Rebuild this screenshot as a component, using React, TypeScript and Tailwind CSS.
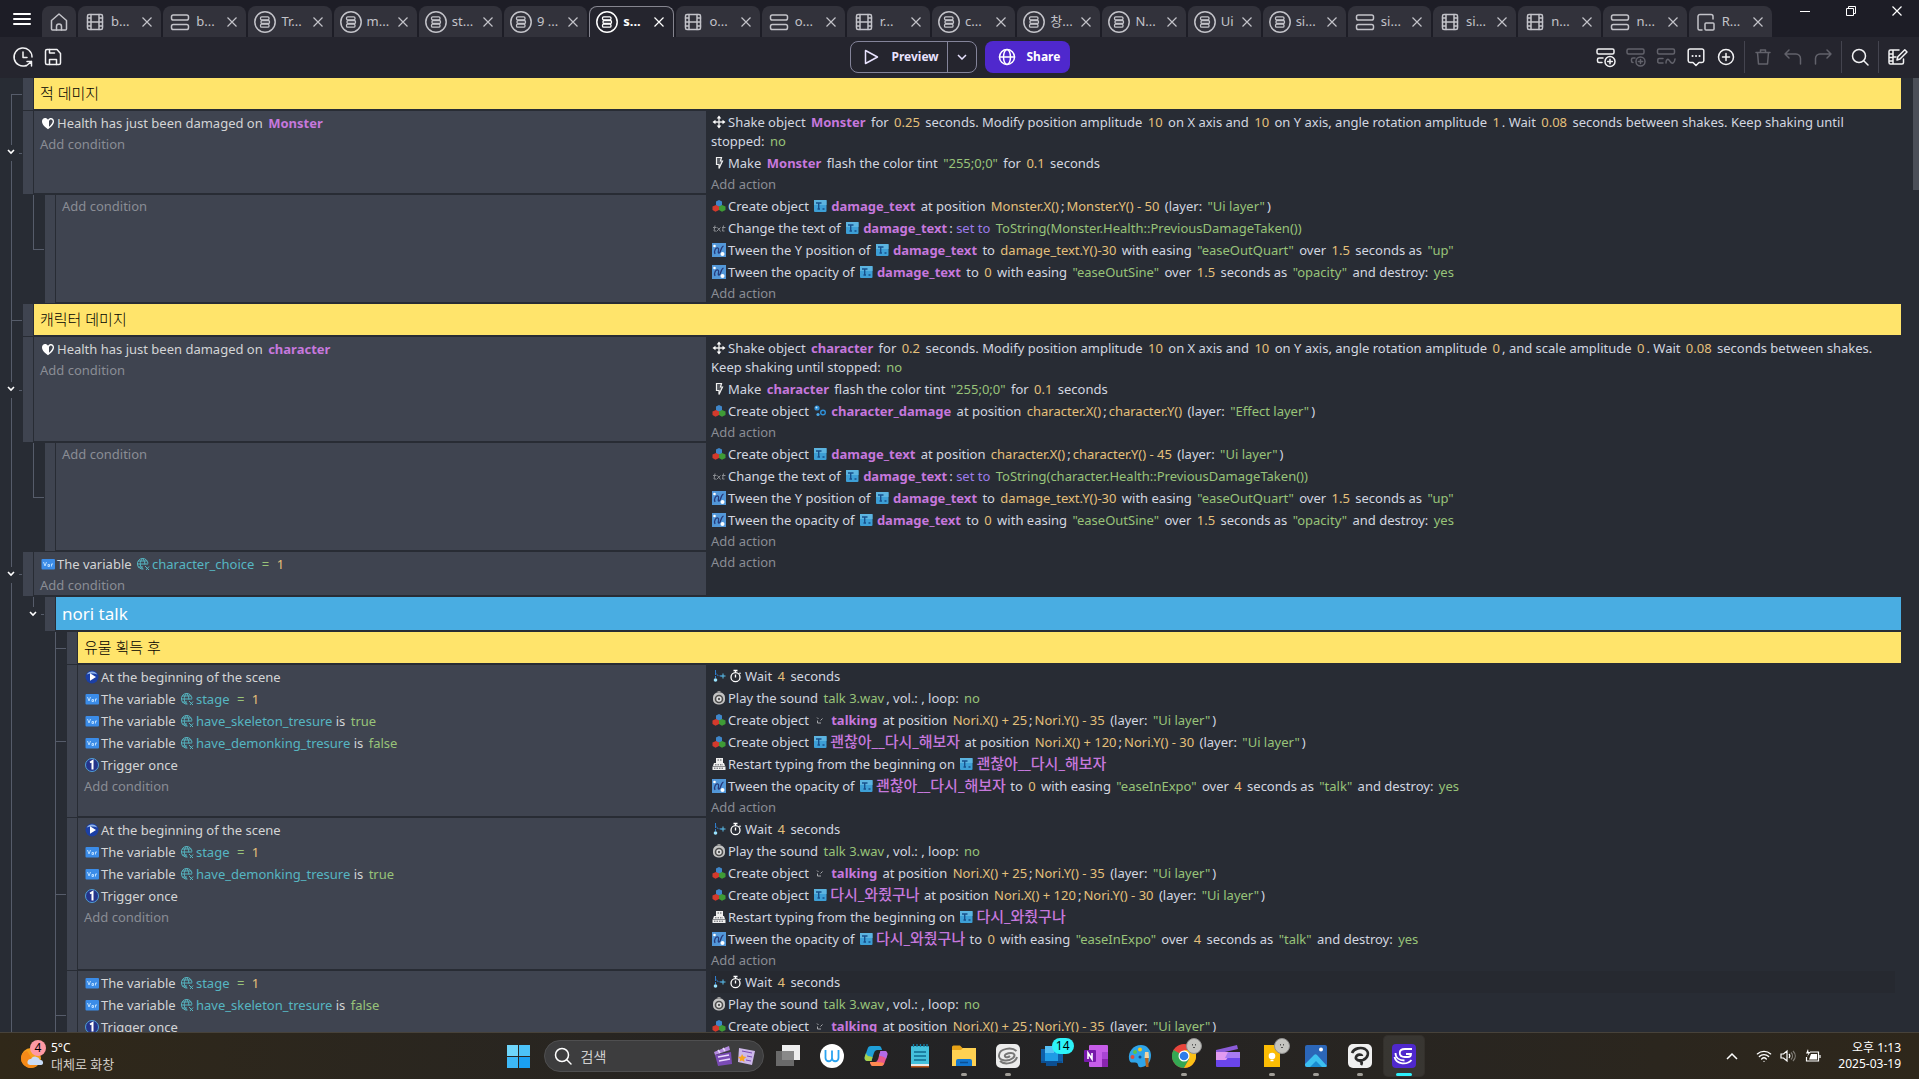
import React from 'react';
import { Wifi } from 'lucide-react';

type IconProps = { className?: string };

const Stroke: React.FC<{ className?: string; children: React.ReactNode }> = ({ className = '', children }) => (
  <svg
    viewBox="0 0 24 24"
    className={`h-6 w-6 shrink-0 ${className}`}
    fill="none"
    stroke="currentColor"
    strokeWidth="1.5"
    strokeLinecap="round"
    strokeLinejoin="round"
    aria-hidden="true"
  >
    {children}
  </svg>
);

/* ---------- tab and toolbar icons ---------- */

const HomeIcon = () => (
  <Stroke>
    <path d="M4.5 10.5 12 4l7.500 6.500V19a1 1 0 0 1-1 1h-13a1 1 0 0 1-1-1z" />
    <path d="M9.500 20v-3.500a2.500 2.500 0 0 1 5 0V20" />
  </Stroke>
);

const FilmIcon = () => (
  <Stroke>
    <rect x="4.500" y="4.500" width="15" height="15" rx="1.500" />
    <path d="M8 4.500v15M16 4.500v15M8 12h8M4.500 8H8M4.500 12H8M4.500 16H8M16 8h3.500M16 12h3.500M16 16h3.500" />
  </Stroke>
);

const LayersIcon = () => (
  <Stroke>
    <rect x="3.500" y="5" width="17" height="5" rx="1.800" />
    <rect x="3.500" y="14.500" width="17" height="5" rx="1.800" />
  </Stroke>
);

const EventsIcon = () => (
  <Stroke>
    <circle cx="12" cy="12" r="10.200" />
    <g strokeWidth="1.300">
      <rect x="7.500" y="6.800" width="8.500" height="3" rx="1.200" />
      <rect x="8" y="10.500" width="8.500" height="3" rx="1.200" />
      <rect x="7.500" y="14.200" width="8.500" height="3" rx="1.200" />
    </g>
  </Stroke>
);

const ExternalIcon = () => (
  <Stroke>
    <path d="M8 20H5.500a1.500 1.500 0 0 1-1.500-1.500v-12A2 2 0 0 1 6 4.500h11a2 2 0 0 1 2 2V9" />
    <rect x="11" y="13" width="9" height="7" rx="1" />
  </Stroke>
);

const HistoryIcon = () => (
  <Stroke>
    <path d="M15 20.500A9 9 0 1 1 21 12M12 7v5.500h4M16 16.500h4.500V21M20.500 16.500 15 21" />
  </Stroke>
);

const SaveIcon = () => (
  <Stroke>
    <path d="M4.500 6A1.500 1.500 0 0 1 6 4.500h10l3.500 4V18a1.500 1.500 0 0 1-1.500 1.500H6A1.500 1.500 0 0 1 4.500 18z" />
    <path d="M8.500 19.500v-5h7v5M8.500 4.500V8h5" />
  </Stroke>
);

const AddEventIcon = ({ className }: IconProps) => (
  <Stroke className={className}>
    <rect x="3" y="4" width="17" height="5" rx="1.500" />
    <path d="M9 13H5a1.500 1.500 0 0 0-1.500 1.500v1.500A1.500 1.500 0 0 0 5 17.500h3" />
    <circle cx="16" cy="16.500" r="5" />
    <path d="M16 14.200v4.600M13.700 16.500h4.600" />
  </Stroke>
);

const AddSubEventIcon = ({ className }: IconProps) => (
  <Stroke className={className}>
    <rect x="3" y="4" width="17" height="5" rx="1.500" />
    <path d="M11 13H9a1.500 1.500 0 0 0-1.500 1.500v1.500A1.500 1.500 0 0 0 9 17.500" />
    <circle cx="16.500" cy="16.500" r="4.500" />
    <path d="M16.500 14.400v4.200M14.400 16.500h4.200" />
  </Stroke>
);

const FreehandEventIcon = ({ className }: IconProps) => (
  <Stroke className={className}>
    <rect x="3.500" y="4" width="17" height="5" rx="1.500" />
    <path d="M9 13.500H5a1.200 1.200 0 0 0-1.200 1.200v2A1.200 1.200 0 0 0 5 18h4M12 18c0-3 1.500-4.500 3-3s2 4 4 3 1.500-2.500 2-4" />
  </Stroke>
);

const CommentIcon = () => (
  <Stroke>
    <path d="M6 4h12a1.800 1.800 0 0 1 1.800 1.800v10a1.800 1.800 0 0 1-1.800 1.700h-3L12 20.500 9 17.500H6a1.800 1.800 0 0 1-1.800-1.700v-10A1.800 1.800 0 0 1 6 4z" />
    <path d="M8.500 11h.1M12 11h.1M15.500 11h.1" strokeWidth="2" />
  </Stroke>
);

const PlusCircleIcon = () => (
  <Stroke>
    <circle cx="12" cy="12" r="7.500" />
    <path d="M12 8.500v7M8.500 12h7" />
  </Stroke>
);

const TrashIcon = () => (
  <Stroke>
    <path d="M5 7.500h14M9.500 7.500V5h5v2.500M6.500 7.500l1 11.500h9l1-11.500" />
  </Stroke>
);

const UndoIcon = () => (
  <Stroke>
    <path d="M8 5 4 9l4 4M4 9h11a4.500 4.500 0 0 1 4.500 4.500V19" />
  </Stroke>
);

const RedoIcon = () => (
  <Stroke>
    <path d="m16 5 4 4-4 4M20 9H9a4.500 4.500 0 0 0-4.500 4.500V19" />
  </Stroke>
);

const SearchIcon = ({ className }: IconProps) => (
  <Stroke className={className}>
    <circle cx="11" cy="11" r="6.500" />
    <path d="m16 16 4 4" />
  </Stroke>
);

const EditSceneIcon = () => (
  <Stroke>
    <path d="M14 5H5.500A1.500 1.500 0 0 0 4 6.500v11A1.500 1.500 0 0 0 5.500 19H17a1.500 1.500 0 0 0 1.500-1.500V14M8 5v14M4 9h4M4 12.500h4M4 16h4M8 12h3" />
    <path d="m12 15 .8-3.200 7-7 2.200 2.200-7 7z" />
  </Stroke>
);

const GlobeIcon = () => (
  <Stroke>
    <circle cx="12" cy="12" r="7.500" />
    <ellipse cx="12" cy="12" rx="3.500" ry="7.500" />
    <path d="M4.500 12h15" />
  </Stroke>
);

/* ---------- event sheet icons ---------- */

const Small: React.FC<{ className?: string; children: React.ReactNode }> = ({ className = '', children }) => (
  <svg viewBox="0 0 16 16" className={`mr-px inline-block h-4 w-4 align-[-3px] ${className}`} aria-hidden="true">
    {children}
  </svg>
);

const HealthIcon = () => (
  <Small>
    <path d="M8 14.200C3.500 11 2 8.800 2 6.300 2 4.300 3.300 3 5 3c1.300 0 2.300.6 3 1.700C8.700 3.600 9.700 3 11 3c1.700 0 3 1.300 3 3.300 0 2.500-1.500 4.700-6 7.900z" fill="#fff" />
    <path d="M9 6c.4-1 1.100-1.600 2-1.600 1 0 1.600.8 1.600 1.900 0 1.700-1.200 3.400-3.600 5.400z" fill="#3f4450" />
  </Small>
);

const VarIcon = () => (
  <Small>
    <rect x="1.500" y="3" width="13.500" height="10.500" rx="1" fill="#3b8ce8" />
    <path d="m3.500 6 1.500 4 1.500-4M8 8.500h1.500v2H8zM11.500 10.500V8h1.500" stroke="#b9dcff" fill="none" />
  </Small>
);

const GlobalVarIcon = () => (
  <Small>
    <g fill="none" stroke="#56b6c2">
      <path d="M8.500 13A5.300 5.300 0 1 1 13 7.500M2 8h11M3 5h9M3 11h5M7.500 2.500c-3 3-3 7.500 0 10.500M7.500 2.500c2 2 2.500 4 2.300 6" />
      <path d="m10 10 4 4M14 10.500 11 14" />
    </g>
  </Small>
);

const PlayIcon = () => (
  <Small>
    <circle cx="8" cy="8" r="6.500" fill="#1b3fa5" />
    <path d="M2.700 5.500A6.200 6.200 0 0 1 13.300 5.500c-3-1.500-7.600-1.500-10.600 0z" fill="#8fb4ea" />
    <path d="M6 4.200v7.600L12 8z" fill="#fff" />
  </Small>
);

const OnceIcon = () => (
  <Small>
    <circle cx="8" cy="8" r="6.500" fill="#24348a" stroke="#4f9fd8" />
    <path d="M6 5.500 8.500 4V12.500" fill="none" stroke="#fff" strokeWidth="2" />
  </Small>
);

const ShakeIcon = () => (
  <Small>
    <path d="M8 3v10M3 8h10" stroke="#e8e8e8" strokeWidth="1.400" />
    <path d="m8 1.500 2.300 3H5.700zM8 14.500l2.300-3H5.700zM1.500 8l3-2.300v4.600zM14.500 8l-3-2.300v4.600z" fill="#fff" />
  </Small>
);

const FlashIcon = () => (
  <Small>
    <path d="M5.500 2.500h5L9.500 6h2L8 13.500V9.500H5.500z" fill="#55585f" stroke="#f0f0f0" strokeWidth="1.200" />
  </Small>
);

const CreateIcon = () => (
  <Small>
    <path d="m8 2 3 1.500v4L8 9 5 7.500v-4z" fill="#3f86c9" />
    <path d="m5 7 3 1.500V12l-3.500 1.800L1.500 12V8.500z" fill="#d33a2c" />
    <path d="m11 7 3.500 1.500V12L11 13.800 8 12V8.500z" fill="#3f9b36" />
  </Small>
);

const TxtIcon = () => (
  <Small>
    <path d="M4 5.500 3 11h2M2 7.500h3.500M6.500 7.500l3 4M9.500 7.500l-4 4M12.500 5.500 11.500 11h2M11 7.500h3.500" stroke="#8a8d92" fill="none" />
  </Small>
);

const TweenIcon = () => (
  <Small>
    <rect x="1" y="1" width="14" height="14" fill="#5297d8" />
    <path d="M4 12c-1.500-3 1-7 3-6s-1 5 1 5 1.500-6 4.500-7" stroke="#26397a" strokeWidth="1.300" fill="none" />
    <circle cx="3.500" cy="4" r="1.300" fill="#fff" />
    <circle cx="11.500" cy="12" r="2" fill="#fff" />
  </Small>
);

const AsyncIcon = () => (
  <Small>
    <path d="M4.500 2v9M4.500 4c0 3 3 4 6 4" stroke="#2f7fd0" fill="none" strokeDasharray="2 1" />
    <path d="M12 5.500v5M9.500 8h5" stroke="#5cc2ee" />
    <circle cx="4.500" cy="12" r="1.800" fill="#9be4ff" />
  </Small>
);

const StopwatchIcon = () => (
  <Small>
    <circle cx="7.500" cy="9.200" r="4.500" stroke="#fff" strokeWidth="1.300" fill="none" />
    <path d="M5.500 2.500h4M7.500 2.500v2M7.500 6.500v3M11.500 4.800l1 1" stroke="#fff" strokeWidth="1.300" />
  </Small>
);

const SoundIcon = () => (
  <Small>
    <rect x="2" y="2.500" width="12" height="12" rx="5" fill="#c3c3c3" />
    <circle cx="8" cy="9" r="4.300" fill="#4c4c4c" />
    <circle cx="8" cy="9" r="2.700" fill="#e2e2e2" />
    <circle cx="8" cy="9" r="1.200" fill="#555" />
    <path d="M6.500 1h3v2h-3z" fill="#999" />
  </Small>
);

const TypingIcon = () => (
  <Small>
    <path d="M5 2h7v5H5zM3 7h10l1 3H2zM1.500 10.500h13V14h-13z" fill="#eee" />
    <path d="M6.500 4h4M4 8.800h8M3 12.200h10" stroke="#55585f" strokeDasharray="1.500 1" />
  </Small>
);

const TextObjectIcon = () => (
  <Small>
    <rect x="2" y="2" width="12.500" height="12" rx="1" fill="#3d9fd6" />
    <rect x="2" y="2" width="12.500" height="5" fill="#5cb4e0" />
    <path d="M4 5h5.500M6.700 5v6M5.500 11h2.500M10.500 11h2" stroke="#17508c" strokeWidth="1.400" />
  </Small>
);

const TalkingIcon = () => (
  <Small>
    <path d="M5 5.500 6.500 7M5.500 8.500v2.500H9M10.500 6.500 8.500 8.500" stroke="#a5a7ab" fill="none" />
  </Small>
);

const ParticleIcon = () => (
  <Small>
    <circle cx="5" cy="5" r="2.600" fill="#2f8fd6" />
    <circle cx="4.500" cy="4.500" r="1" fill="#bfe6ff" />
    <circle cx="11" cy="9.500" r="2.300" fill="none" stroke="#2f8fd6" strokeWidth="1.400" />
    <circle cx="6" cy="11.500" r="1.600" fill="#4aa8e6" />
  </Small>
);

/* ---------- inline parameters ---------- */

type Kids = { children: React.ReactNode };

const Obj = ({ children }: Kids) => <b className="px-0.5 font-bold text-[#c678dd]">{children}</b>;
const KoObj = ({ children }: Kids) => (
  <span className="px-px text-[15px] leading-none font-medium text-[#c678dd]">{children}</span>
);
const Num = ({ children }: Kids) => <span className="px-0.5 text-[#e5c07b]">{children}</span>;
const Str = ({ children }: Kids) => <span className="px-0.5 text-[#98c379]">{children}</span>;
const Op = ({ children }: Kids) => <span className="text-[#9d7bea]">{children}</span>;
const Eq = () => <span className="pr-0.5 pl-1 text-[#98c379]">=</span>;
const Var = ({ children }: Kids) => (
  <span className="text-[#56b6c2]">
    <GlobalVarIcon />
    {children}
  </span>
);

const DamageText = () => (
  <>
    <TextObjectIcon />
    <Obj>damage_text</Obj>
  </>
);

const shake = (name: string, seconds: string, rest: React.ReactNode) => (
  <>
    <ShakeIcon />
    Shake object <Obj>{name}</Obj> for <Num>{seconds}</Num> seconds. Modify position amplitude <Num>10</Num> on X axis
    and <Num>10</Num> on Y axis, angle rotation amplitude {rest}. Wait <Num>0.08</Num> seconds between shakes. Keep
    shaking until stopped: <Str>no</Str>
  </>
);

const flash = (name: string) => (
  <>
    <FlashIcon />
    Make <Obj>{name}</Obj> flash the color tint <Str>"255;0;0"</Str> for <Num>0.1</Num> seconds
  </>
);

const create = (object: React.ReactNode, x: string, y: string, layer: string) => (
  <>
    <CreateIcon />
    Create object {object} at position <Num>{x}</Num>;<Num>{y}</Num> (layer: <Str>"{layer}"</Str>)
  </>
);

const setText = (value: string) => (
  <>
    <TxtIcon />
    Change the text of <DamageText />: <Op>set to</Op> <Str>{value}</Str>
  </>
);

const tweenY = (
  <>
    <TweenIcon />
    Tween the Y position of <DamageText /> to <Num>damage_text.Y()-30</Num> with easing <Str>"easeOutQuart"</Str> over{' '}
    <Num>1.5</Num> seconds as <Str>"up"</Str>
  </>
);

const tweenOpacity = (object: React.ReactNode, easing: string, seconds: string, id: string) => (
  <>
    <TweenIcon />
    Tween the opacity of {object} to <Num>0</Num> with easing <Str>"{easing}"</Str> over <Num>{seconds}</Num> seconds as{' '}
    <Str>"{id}"</Str> and destroy: <Str>yes</Str>
  </>
);

const wait = (
  <>
    <AsyncIcon />
    <StopwatchIcon />
    Wait <Num>4</Num> seconds
  </>
);

const playSound = (
  <>
    <SoundIcon />
    Play the sound <Str>talk 3.wav</Str>, vol.: , loop: <Str>no</Str>
  </>
);

const createTalking = create(
  <>
    <TalkingIcon />
    <Obj>talking</Obj>
  </>,
  'Nori.X() + 25',
  'Nori.Y() - 35',
  'Ui layer'
);

const speech = (text: string) => (
  <>
    <TextObjectIcon />
    <KoObj>{text}</KoObj>
  </>
);

const talkActions = (text: string) => [
  wait,
  playSound,
  createTalking,
  create(speech(text), 'Nori.X() + 120', 'Nori.Y() - 30', 'Ui layer'),
  <>
    <TypingIcon />
    Restart typing from the beginning on {speech(text)}
  </>,
  tweenOpacity(speech(text), 'easeInExpo', '4', 'talk'),
];

const damaged = (name: string) => (
  <>
    <HealthIcon />
    Health has just been damaged on <Obj>{name}</Obj>
  </>
);

const varEquals = (name: string) => (
  <>
    <VarIcon />
    The variable <Var>{name}</Var> <Eq /> <Num>1</Num>
  </>
);

const varIs = (name: string, value: string) => (
  <>
    <VarIcon />
    The variable <Var>{name}</Var> is <Str>{value}</Str>
  </>
);

const sceneBegin = (
  <>
    <PlayIcon />
    At the beginning of the scene
  </>
);

const triggerOnce = (
  <>
    <OnceIcon />
    Trigger once
  </>
);

/* ---------- event tree ---------- */

// up / down: line above or below the middle of the row, tick: branch to the row
type Rail = { up?: boolean; down?: boolean; tick?: boolean; toggle?: boolean };

type Row = { rails: Rail[] } & (
  | { kind: 'comment'; text: string }
  | { kind: 'group'; text: string }
  | { kind: 'event'; conditions: React.ReactNode[]; actions: React.ReactNode[]; hovered?: boolean }
);

const none: Rail = {};
const pass: Rail = { up: true, down: true };
const tee: Rail = { up: true, down: true, tick: true };
const fork: Rail = { up: true, down: true, tick: true, toggle: true };

const rows: Row[] = [
  { kind: 'comment', text: '적 데미지', rails: [{ down: true, tick: true }] },
  {
    kind: 'event',
    rails: [fork],
    conditions: [damaged('Monster')],
    actions: [shake('Monster', '0.25', <Num>1</Num>), flash('Monster')],
  },
  {
    kind: 'event',
    rails: [pass, { up: true, tick: true }],
    conditions: [],
    actions: [
      create(<DamageText />, 'Monster.X()', 'Monster.Y() - 50', 'Ui layer'),
      setText('ToString(Monster.Health::PreviousDamageTaken())'),
      tweenY,
      tweenOpacity(<DamageText />, 'easeOutSine', '1.5', 'opacity'),
    ],
  },
  { kind: 'comment', text: '캐릭터 데미지', rails: [tee] },
  {
    kind: 'event',
    rails: [fork],
    conditions: [damaged('character')],
    actions: [
      shake(
        'character',
        '0.2',
        <>
          <Num>0</Num>, and scale amplitude <Num>0</Num>
        </>
      ),
      flash('character'),
      create(
        <>
          <ParticleIcon />
          <Obj>character_damage</Obj>
        </>,
        'character.X()',
        'character.Y()',
        'Effect layer'
      ),
    ],
  },
  {
    kind: 'event',
    rails: [pass, { up: true, tick: true }],
    conditions: [],
    actions: [
      create(<DamageText />, 'character.X()', 'character.Y() - 45', 'Ui layer'),
      setText('ToString(character.Health::PreviousDamageTaken())'),
      tweenY,
      tweenOpacity(<DamageText />, 'easeOutSine', '1.5', 'opacity'),
    ],
  },
  { kind: 'event', rails: [fork], conditions: [varEquals('character_choice')], actions: [] },
  { kind: 'group', text: 'nori talk', rails: [pass, { up: true, tick: true, toggle: true }] },
  { kind: 'comment', text: '유물 획득 후', rails: [pass, none, tee] },
  {
    kind: 'event',
    rails: [pass, none, tee],
    conditions: [
      sceneBegin,
      varEquals('stage'),
      varIs('have_skeleton_tresure', 'true'),
      varIs('have_demonking_tresure', 'false'),
      triggerOnce,
    ],
    actions: talkActions('괜찮아__다시_해보자'),
  },
  {
    kind: 'event',
    rails: [pass, none, tee],
    conditions: [sceneBegin, varEquals('stage'), varIs('have_demonking_tresure', 'true'), triggerOnce],
    actions: talkActions('다시_와줬구나'),
  },
  {
    kind: 'event',
    rails: [pass, none, tee],
    conditions: [varEquals('stage'), varIs('have_skeleton_tresure', 'false'), triggerOnce],
    actions: [wait, playSound, createTalking],
    hovered: true,
  },
];

const RailCell: React.FC<{ rail: Rail }> = ({ rail }) => (
  <div className="relative flex w-[22px] shrink-0 flex-col pl-[11px]">
    <div className={`flex-1 border-[#565c6a] ${rail.up ? 'border-l' : ''} ${rail.tick ? 'border-b' : ''}`} />
    <div className={`flex-1 border-[#565c6a] ${rail.down ? 'border-l' : ''}`} />
    {rail.toggle && (
      <button
        aria-label="Fold"
        className="absolute inset-y-0 left-[3px] my-auto flex h-4 w-4 items-center justify-center bg-[#282c34] pb-0.5 text-white"
      >
        <svg viewBox="0 0 8 6" className="h-1.5 w-2" fill="none" stroke="currentColor" strokeWidth="1.600">
          <path d="m1 1 3 3 3-3" />
        </svg>
      </button>
    )}
  </div>
);

const AddButton: React.FC<{ label: string }> = ({ label }) => (
  <button className="block pt-px text-left leading-[18px] text-[#8a8d95]">{label}</button>
);

const EventRow: React.FC<{ row: Row }> = ({ row }) => {
  const left = (
    <>
      {row.rails.map((rail, i) => (
        <RailCell key={i} rail={rail} />
      ))}
      <div className="mr-px mb-px ml-px w-2.5 shrink-0 bg-[#3f4450]" />
    </>
  );

  if (row.kind === 'comment') {
    return (
      <div className="flex">
        {left}
        <p className="mb-0.5 flex-1 bg-[#ffe46b] px-1.5 text-[15px] leading-[31px] font-light text-black">{row.text}</p>
      </div>
    );
  }

  if (row.kind === 'group') {
    return (
      <div className="flex">
        {left}
        <h2 className="mb-0.5 flex-1 bg-[#49ade2] px-1.5 text-[17px] leading-[33px] text-white">{row.text}</h2>
      </div>
    );
  }

  return (
    <div className="flex">
      <div className="flex w-[706px] shrink-0">
        {left}
        <div className="mb-0.5 min-w-0 flex-1 bg-[#3f4450] px-1.5 py-px text-[#d4d5d6]">
          {row.conditions.map((condition, i) => (
            <div key={i} className="pt-0.5 pb-px leading-[19px]">
              {condition}
            </div>
          ))}
          <AddButton label="Add condition" />
        </div>
      </div>
      <div className="min-w-0 flex-1 pr-1.5 pb-0.5 pl-[5px] text-[#d3d7e0]">
        {row.actions.map((action, i) => (
          <div key={i} className={`pt-0.5 pr-3 pb-px leading-[19px] ${row.hovered && i === 0 ? 'bg-[#262930]' : ''}`}>
            {action}
          </div>
        ))}
        <AddButton label="Add action" />
      </div>
    </div>
  );
};

/* ---------- window chrome ---------- */

const tabs = [
  { icon: FilmIcon, label: 'b...' },
  { icon: LayersIcon, label: 'b...' },
  { icon: EventsIcon, label: 'Tr...' },
  { icon: EventsIcon, label: 'm...' },
  { icon: EventsIcon, label: 'st...' },
  { icon: EventsIcon, label: '9 ...' },
  { icon: EventsIcon, label: 's...', active: true },
  { icon: FilmIcon, label: 'o...' },
  { icon: LayersIcon, label: 'o...' },
  { icon: FilmIcon, label: 'r...' },
  { icon: EventsIcon, label: 'c...' },
  { icon: EventsIcon, label: '창...' },
  { icon: EventsIcon, label: 'N...' },
  { icon: EventsIcon, label: 'Ui', narrow: true },
  { icon: EventsIcon, label: 'si...' },
  { icon: LayersIcon, label: 'si...' },
  { icon: FilmIcon, label: 'si...' },
  { icon: FilmIcon, label: 'n...' },
  { icon: LayersIcon, label: 'n...' },
  { icon: ExternalIcon, label: 'R...' },
];

const CloseGlyph = () => (
  <svg viewBox="0 0 10 10" className="h-2.5 w-2.5" fill="none" stroke="currentColor" strokeWidth="1.200">
    <path d="m.5.5 9 9M9.500.5l-9 9" />
  </svg>
);

const TabBar: React.FC = () => (
  <header className="flex h-[37px] shrink-0 items-end bg-[#1d1d26] text-[#c3c3c9]">
    <button aria-label="Main menu" className="flex h-9 w-[42px] items-center pl-[13px] text-white">
      <svg viewBox="0 0 18 14" className="h-3.5 w-[18px]" stroke="currentColor" strokeWidth="2" strokeLinecap="round">
        <path d="M1 2h16M1 7h16M1 12h16" />
      </svg>
    </button>
    <button aria-label="Home" className="mr-0.5 flex h-[31px] w-[34px] items-center justify-center rounded-t-lg bg-[#32323b]">
      <HomeIcon />
    </button>
    <nav className="flex min-w-0 flex-1 gap-0.5">
      {tabs.map(({ icon: TabIcon, label, active, narrow }, i) => (
        <div
          key={i}
          className={`flex h-[31px] items-center rounded-t-lg pr-[9px] pl-[5px] ${
            active ? 'border-x border-t border-[#85858f] bg-[#25252e] text-white' : 'bg-[#32323b]'
          } ${narrow ? 'w-[73px] flex-none' : 'min-w-0 flex-1'}`}
        >
          <button className={`flex flex-1 items-center gap-1 text-[13px] ${active ? 'font-bold' : ''}`}>
            <TabIcon />
            {label}
          </button>
          <button aria-label="Close tab">
            <CloseGlyph />
          </button>
        </div>
      ))}
    </nav>
    <div className="flex h-[37px] w-[147px] shrink-0 items-start justify-end pt-[6px] pr-[17px] text-white">
      <div className="flex items-center gap-9">
        <button aria-label="Minimize">
          <svg viewBox="0 0 10 10" className="h-2.5 w-2.5" stroke="currentColor">
            <path d="M0 5.500h10" />
          </svg>
        </button>
        <button aria-label="Restore">
          <svg viewBox="0 0 10 10" className="h-2.5 w-2.5" fill="none" stroke="currentColor">
            <path d="M.5 2.500h7v7h-7zM2.500 2.500v-2h7v7h-2" />
          </svg>
        </button>
        <button aria-label="Close">
          <CloseGlyph />
        </button>
      </div>
    </div>
  </header>
);

const Divider = () => <span className="h-8 w-px bg-[#44444f]" />;

const ToolButton: React.FC<{ label: string; disabled?: boolean; children: React.ReactNode }> = ({
  label,
  disabled,
  children,
}) => (
  <button aria-label={label} disabled={disabled} className={disabled ? 'text-[#62626b]' : 'text-[#f2f2f4]'}>
    {children}
  </button>
);

const Toolbar: React.FC = () => (
  <div className="grid h-[41px] shrink-0 grid-cols-[1fr_auto_1fr] items-center bg-[#25252e] pb-px">
    <div className="flex gap-1.5 pl-[11px]">
      <ToolButton label="History">
        <HistoryIcon />
      </ToolButton>
      <ToolButton label="Save">
        <SaveIcon />
      </ToolButton>
    </div>
    <div className="flex gap-2 text-[12px] font-bold">
      <div className="flex h-8 rounded-lg border border-[#84849a] text-[#e9e3ff]">
        <button className="flex w-[97px] items-center gap-[9px] border-r border-[#84849a] pl-2">
          <Stroke>
            <path d="M6.500 5.500v13l12-6.500z" />
          </Stroke>
          Preview
        </button>
        <button aria-label="Preview options" className="flex w-7 items-center justify-center">
          <svg viewBox="0 0 10 6" className="h-1.5 w-2.5" fill="none" stroke="currentColor" strokeWidth="1.500">
            <path d="m1 1 4 4 4-4" />
          </svg>
        </button>
      </div>
      <button className="flex h-8 w-[85px] items-center gap-2 rounded-lg bg-[#4f28cd] pl-2.5 text-white">
        <GlobeIcon />
        Share
      </button>
    </div>
    <div className="flex items-center justify-end gap-1.5 pr-2.5">
      <ToolButton label="Add an event">
        <AddEventIcon />
      </ToolButton>
      <ToolButton label="Add a sub-event" disabled>
        <AddSubEventIcon />
      </ToolButton>
      <ToolButton label="Toggle event" disabled>
        <FreehandEventIcon />
      </ToolButton>
      <ToolButton label="Add a comment">
        <CommentIcon />
      </ToolButton>
      <ToolButton label="Add other">
        <PlusCircleIcon />
      </ToolButton>
      <Divider />
      <ToolButton label="Delete" disabled>
        <TrashIcon />
      </ToolButton>
      <ToolButton label="Undo" disabled>
        <UndoIcon />
      </ToolButton>
      <ToolButton label="Redo" disabled>
        <RedoIcon />
      </ToolButton>
      <Divider />
      <ToolButton label="Search">
        <SearchIcon />
      </ToolButton>
      <Divider />
      <ToolButton label="Edit scene">
        <EditSceneIcon />
      </ToolButton>
    </div>
  </div>
);

/* ---------- taskbar ---------- */

const AppIcon = ({ children }: Kids) => (
  <svg viewBox="0 0 24 24" className="h-6 w-6" aria-hidden="true">
    {children}
  </svg>
);

const apps: { name: string; running?: boolean; active?: boolean; badge?: string; avatar?: boolean; icon: React.ReactNode }[] = [
  {
    name: 'Task view',
    icon: (
      <>
        <rect x="6" y="1" width="18" height="15" fill="#eee" />
        <rect x="0" y="7" width="18" height="15" fill="#777" fillOpacity=".85" />
      </>
    ),
  },
  {
    name: 'Whale',
    icon: (
      <>
        <circle cx="12" cy="12" r="12" fill="#fff" />
        <path d="M5.500 6v8a3.200 3.200 0 0 0 6.500 0V6.500V14a3.200 3.200 0 0 0 6.500 0V6" fill="none" stroke="#2aa3f0" strokeWidth="1.800" />
      </>
    ),
  },
  {
    name: 'Copilot',
    icon: (
      <>
        <path d="M7 2h8c2 0 2.500 2 3 4l-5 0c-2 0-3 2-4 6l-1.500 5H4c-3 0-4-2-3-5L3.500 5C4 3 5 2 7 2z" fill="#1f9fd8" />
        <path d="M2 9c1 4 4 3 6.500 4L7.500 17H4c-3 0-4-2-3-5z" fill="#a9d14a" />
        <path d="M17 22H9c-2 0-2.500-2-3-4h5c2 0 3-2 4-6l1.500-5H20c3 0 4 2 3 5l-2.500 7c-.5 2-1.500 3-3.500 3z" fill="#e8578e" />
        <path d="M17 22H9c-2 0-2.500-2-3-4h5c3 0 5 0 9 1-.5 2-1.500 3-3 3z" fill="#ff8a50" />
        <path d="M16.500 7H20c3 0 4 2 3 5l-1 3c-2-3-5-3-7-3z" fill="#b46be8" />
      </>
    ),
  },
  {
    name: 'Notepad',
    icon: (
      <>
        <rect x="3" y="2" width="18" height="21" rx="1" fill="#45c1dc" />
        <path d="M3 20h18v2H3z" fill="#e8e8e8" />
        <path d="M3 22h18v1.500H3z" fill="#b9551a" />
        <path d="M6 8h12M6 12h12M6 16h12" stroke="#0f6b8f" strokeWidth="1.300" />
        <path d="M5.500 0v3M9 0v3M12.500 0v3M16 0v3M19 0v3" stroke="#1580a8" strokeWidth="1.300" />
      </>
    ),
  },
  {
    name: 'File Explorer',
    running: true,
    icon: (
      <>
        <path d="M0 3a1.500 1.500 0 0 1 1.500-1.500H8L10.500 4H24v18H0z" fill="#e8a317" />
        <path d="M0 6h9l2-2h13v18H0z" fill="#ffd152" />
        <path d="M4 17a2 2 0 0 1 2-2h12a2 2 0 0 1 2 2v5H4z" fill="#1377d0" />
        <path d="M8 18.500h8" stroke="#0b4f93" strokeWidth="1.500" />
      </>
    ),
  },
  {
    name: 'Clip Studio',
    running: true,
    icon: (
      <>
        <rect width="24" height="24" rx="5" fill="#ececec" />
        <path d="M20.500 7C16 3 4 4 3 11c-1 6 9 7 14 3 3-3 1-5-2-5-4 0-7 2-6 3.500s4 .5 5-.5M4 17c4 4 15 3 17-4" fill="none" stroke="#777" strokeWidth="2" />
      </>
    ),
  },
  {
    name: 'Phone Link',
    badge: '14',
    icon: (
      <>
        <path d="M1 5h5v14H1zM17 8h6v11h-6z" fill="#0f5fa8" />
        <rect x="5" y="2" width="13" height="15" fill="#1f9be6" />
        <path d="M5 2h9v7H5z" fill="#56c0f5" />
        <path d="M1 17h21v2H1zM6 19h11v3H6z" fill="#0c4f92" />
      </>
    ),
  },
  {
    name: 'OneNote',
    icon: (
      <>
        <rect x="5" y="1" width="19" height="22" rx="1" fill="#c65de8" />
        <path d="M18 8h6v7h-6z" fill="#a944d4" />
        <path d="M18 15h6v8h-6z" fill="#8a25b0" />
        <rect x="0" y="6" width="12" height="12" rx="1" fill="#7719aa" />
        <path d="M4 15V9l4 6V9" stroke="#fff" strokeWidth="1.600" fill="none" />
      </>
    ),
  },
  {
    name: 'Paint',
    icon: (
      <>
        <path d="M13 1C5 1 0 8 1 15c1 6 6 2 8 4s0 5 5 4c6-1 9-6 9-12 0-5-4-10-10-10z" fill="#2fa4e8" />
        <circle cx="7" cy="8" r="2" fill="#5bc44a" />
        <circle cx="12" cy="5.500" r="2" fill="#f6c51b" />
        <circle cx="4.500" cy="13" r="2" fill="#e24b3a" />
        <circle cx="12" cy="13" r="1.500" fill="#1a4f8a" />
        <path d="M17 8h3.500l.5 6h-4.500z" fill="#f2d3a0" />
        <path d="M17 14h3.500v9H18z" fill="#b5651d" />
      </>
    ),
  },
  {
    name: 'Chrome',
    running: true,
    avatar: true,
    icon: (
      <>
        <circle cx="12" cy="12" r="12" fill="#e8453c" />
        <path d="M1.600 6A12 12 0 0 0 12 24l5.200-9z" fill="#34a853" />
        <path d="M12 24A12 12 0 0 0 22.400 6H12l5.200 9z" fill="#fbc116" />
        <circle cx="12" cy="12" r="5.500" fill="#fff" />
        <circle cx="12" cy="12" r="4.300" fill="#2f7de9" />
      </>
    ),
  },
  {
    name: 'Clipchamp',
    icon: (
      <>
        <path d="m0 6 21-5 1 4L0 10z" fill="#8b5bd8" />
        <rect x="0" y="8" width="24" height="15" rx="1" fill="#6a45ea" />
        <path d="M0 8h16l-6 8H0z" fill="#e29bf0" />
        <path d="M12 8h12v6H9z" fill="#a77bf2" />
      </>
    ),
  },
  {
    name: 'Keep',
    running: true,
    avatar: true,
    icon: (
      <>
        <path d="M4 1h10l6 6v16H4z" fill="#fbbc04" />
        <circle cx="12" cy="12" r="3.300" fill="#fff" />
        <path d="M10.500 16.500h3" stroke="#fff" strokeWidth="1.500" />
      </>
    ),
  },
  {
    name: 'Photos',
    running: true,
    icon: (
      <>
        <rect x="1" y="1" width="22" height="22" rx="2" fill="#2b66b8" />
        <path d="m1 20 9-9c1-1 2-1 3 0l10 11a2 2 0 0 1-2 1H3a2 2 0 0 1-2-2z" fill="#3cc0f0" />
        <path d="m6 23 6-6 6 6z" fill="#1a8bd0" />
        <circle cx="17" cy="5.500" r="2" fill="#fff" />
      </>
    ),
  },
  {
    name: 'Clip Studio Paint',
    running: true,
    icon: (
      <>
        <rect width="24" height="24" rx="5" fill="#f0f0f0" />
        <path d="M4 9c2-5 9-6 13-4 5 3 3 9-2 11-4 1-8 0-7-3s6-3 6-1M9 16c4 1 6 2 4 5" fill="none" stroke="#2b2b2b" strokeWidth="2.600" />
      </>
    ),
  },
  {
    name: 'GDevelop',
    active: true,
    icon: (
      <>
        <rect width="24" height="24" rx="4" fill="#4f28cd" />
        <path d="M20 5h-7c-7 0-7 8 0 8h3c2 0 3-1 3-3h-5M2.500 13c2 8 13 8 17 3M3.500 9c0 5 4 7.500 9 7.500" fill="none" stroke="#fff" strokeWidth="1.800" />
      </>
    ),
  },
];

const Taskbar: React.FC = () => (
  <footer className="relative z-10 flex h-[47px] shrink-0 items-center border-t border-[#47423a] bg-linear-to-r from-[#302819] via-[#232325] to-[#2e271b] text-[12px] text-white">
    <button className="flex flex-1 items-center gap-1.5 pl-[21px] text-left">
      <span className="relative h-7 w-6">
        <svg viewBox="0 0 24 28" className="h-7 w-6" aria-hidden="true">
          <circle cx="10" cy="16" r="10" fill="#f7a01f" />
          <path d="M0 16a10 10 0 0 0 16 8L6 9c-4 1-6 4-6 7z" fill="#f58a18" />
          <path d="M9 23a3 3 0 0 1 1-6 5 5 0 0 1 9 1 2.500 2.500 0 0 1 1 5z" fill="#c9dcf7" />
        </svg>
        <span className="absolute -top-0.5 left-[9px] h-4 w-4 rounded-full bg-[#ff99a4] text-center leading-4 text-black">
          4
        </span>
      </span>
      <span className="leading-4">
        5°C
        <br />
        <span className="text-[13px] text-[#cfcbc4]">대체로 화창</span>
      </span>
    </button>

    <div className="flex items-center">
      <button aria-label="Start" className="flex h-10 w-11 items-center justify-center">
        <svg viewBox="0 0 23 23" className="h-[23px] w-[23px]">
          <path d="M0 0h11v11H0z" fill="#6fd6fb" />
          <path d="M12 0h11v11H12z" fill="#4cc2f8" />
          <path d="M0 12h11v11H0z" fill="#3db8f7" />
          <path d="M12 12h11v11H12z" fill="#1a9ff2" />
        </svg>
      </button>
      <div className="mr-0.5 ml-[3px] flex h-8 w-[220px] items-center rounded-full border border-[#4f4f50] bg-[#3d3d3e] pr-2 pl-1.5">
        <SearchIcon />
        <input
          aria-label="검색"
          placeholder="검색"
          className="ml-1.5 w-0 flex-1 bg-transparent text-[14px] outline-none placeholder:text-[#cfcfcf]"
        />
        <svg viewBox="0 0 42 24" className="h-6 w-[42px]" aria-hidden="true">
          <path d="m1 8 15-6 1 4L2 11z" fill="#b48be0" />
          <path d="m2 11 16-3 1 12-14 2z" fill="#7a4bb5" />
          <path d="m5 13 11-2M6 17l11-2M5 6l2 3M10 4l2 3" stroke="#e9d8fb" strokeWidth="1.500" />
          <path d="m26 4 16 3-3 14-14-3z" fill="#cdb8ea" />
          <path d="m29 7 10 2M34 12l5 1M33 16l5 1" stroke="#7a4bb5" />
          <path d="m29 10 1.500 2.500 3 .5-2.500 2 .5 3-2.500-1.500-2.500 1 .5-2.500-2-2 3-.5z" fill="#f6a623" />
        </svg>
      </div>
      {apps.map((app) => (
        <button
          key={app.name}
          aria-label={app.name}
          className={`relative mx-0.5 flex h-10 w-10 items-center justify-center rounded ${
            app.active ? 'bg-white/8 ring-1 ring-white/5' : ''
          }`}
        >
          <AppIcon>{app.icon}</AppIcon>
          {app.badge && (
            <span className="absolute top-0.5 -right-0.5 h-4 rounded-full bg-[#2df3f9] px-1 leading-4 text-black">
              {app.badge}
            </span>
          )}
          {app.avatar && (
            <span className="absolute top-0.5 right-0.5 flex h-4 w-4 items-center justify-center rounded-full border border-[#8f8f8f] bg-[#c4c4c0]">
              <svg viewBox="0 0 8 8" className="h-2 w-2" stroke="#555" fill="none">
                <path d="M2.500 2v1.500M5.500 2v1.500M3 5.500h2" />
              </svg>
            </span>
          )}
          {app.running && <span className="absolute bottom-0 h-[3px] w-1.5 rounded-full bg-[#a09d97]" />}
          {app.active && <span className="absolute bottom-0 h-[3px] w-4 rounded-full bg-[#2ef0fb]" />}
        </button>
      ))}
    </div>

    <div className="flex flex-1 items-center justify-end pr-[18px]">
      <button aria-label="Show hidden icons" className="mr-[18px]">
        <svg viewBox="0 0 12 8" className="h-2 w-3" fill="none" stroke="currentColor" strokeWidth="1.500">
          <path d="m1 7 5-5 5 5" />
        </svg>
      </button>
      <button aria-label="Network and sound" className="mr-4 flex items-center gap-2">
        <Wifi className="h-4 w-4" />
        <svg viewBox="0 0 16 16" className="h-4 w-4" fill="none" stroke="currentColor" strokeWidth="1.200">
          <path d="M1 6h2.500L7 3v10l-3.500-3H1zM9 6c1 1.200 1 2.800 0 4" />
          <path d="M11 4.500c2 2 2 5 0 7M13 3c3 3 3 7 0 10" opacity=".4" />
        </svg>
        <svg viewBox="0 0 18 16" className="h-4 w-[18px]" fill="none" stroke="currentColor" strokeWidth="1.200">
          <path d="M6 4h8.500v9H2.500V9M16 7v3" />
          <path d="M5 11.500 7 6h6v5.500z" fill="currentColor" stroke="none" />
          <path d="M4 1 2 5.500h2.500L3 9l3.500-5H4.500z" fill="currentColor" stroke="none" />
        </svg>
      </button>
      <time className="text-right leading-4">
        오후 1:13
        <br />
        2025-03-19
      </time>
    </div>
  </footer>
);

export default function App() {
  return (
    <div className="flex h-screen flex-col overflow-hidden bg-[#282c34] font-['Noto_Sans','Noto_Sans_CJK_KR',sans-serif] text-[13px]">
      <TabBar />
      <Toolbar />
      <main className="flex min-h-0 flex-1">
        <div className="min-w-0 flex-1 overflow-hidden">
          {rows.map((row, i) => (
            <EventRow key={i} row={row} />
          ))}
        </div>
        <div className="w-[18px] shrink-0 pl-3">
          <div className="h-28 w-1.5 bg-[#4b4f58]" />
        </div>
      </main>
      <Taskbar />
    </div>
  );
}
